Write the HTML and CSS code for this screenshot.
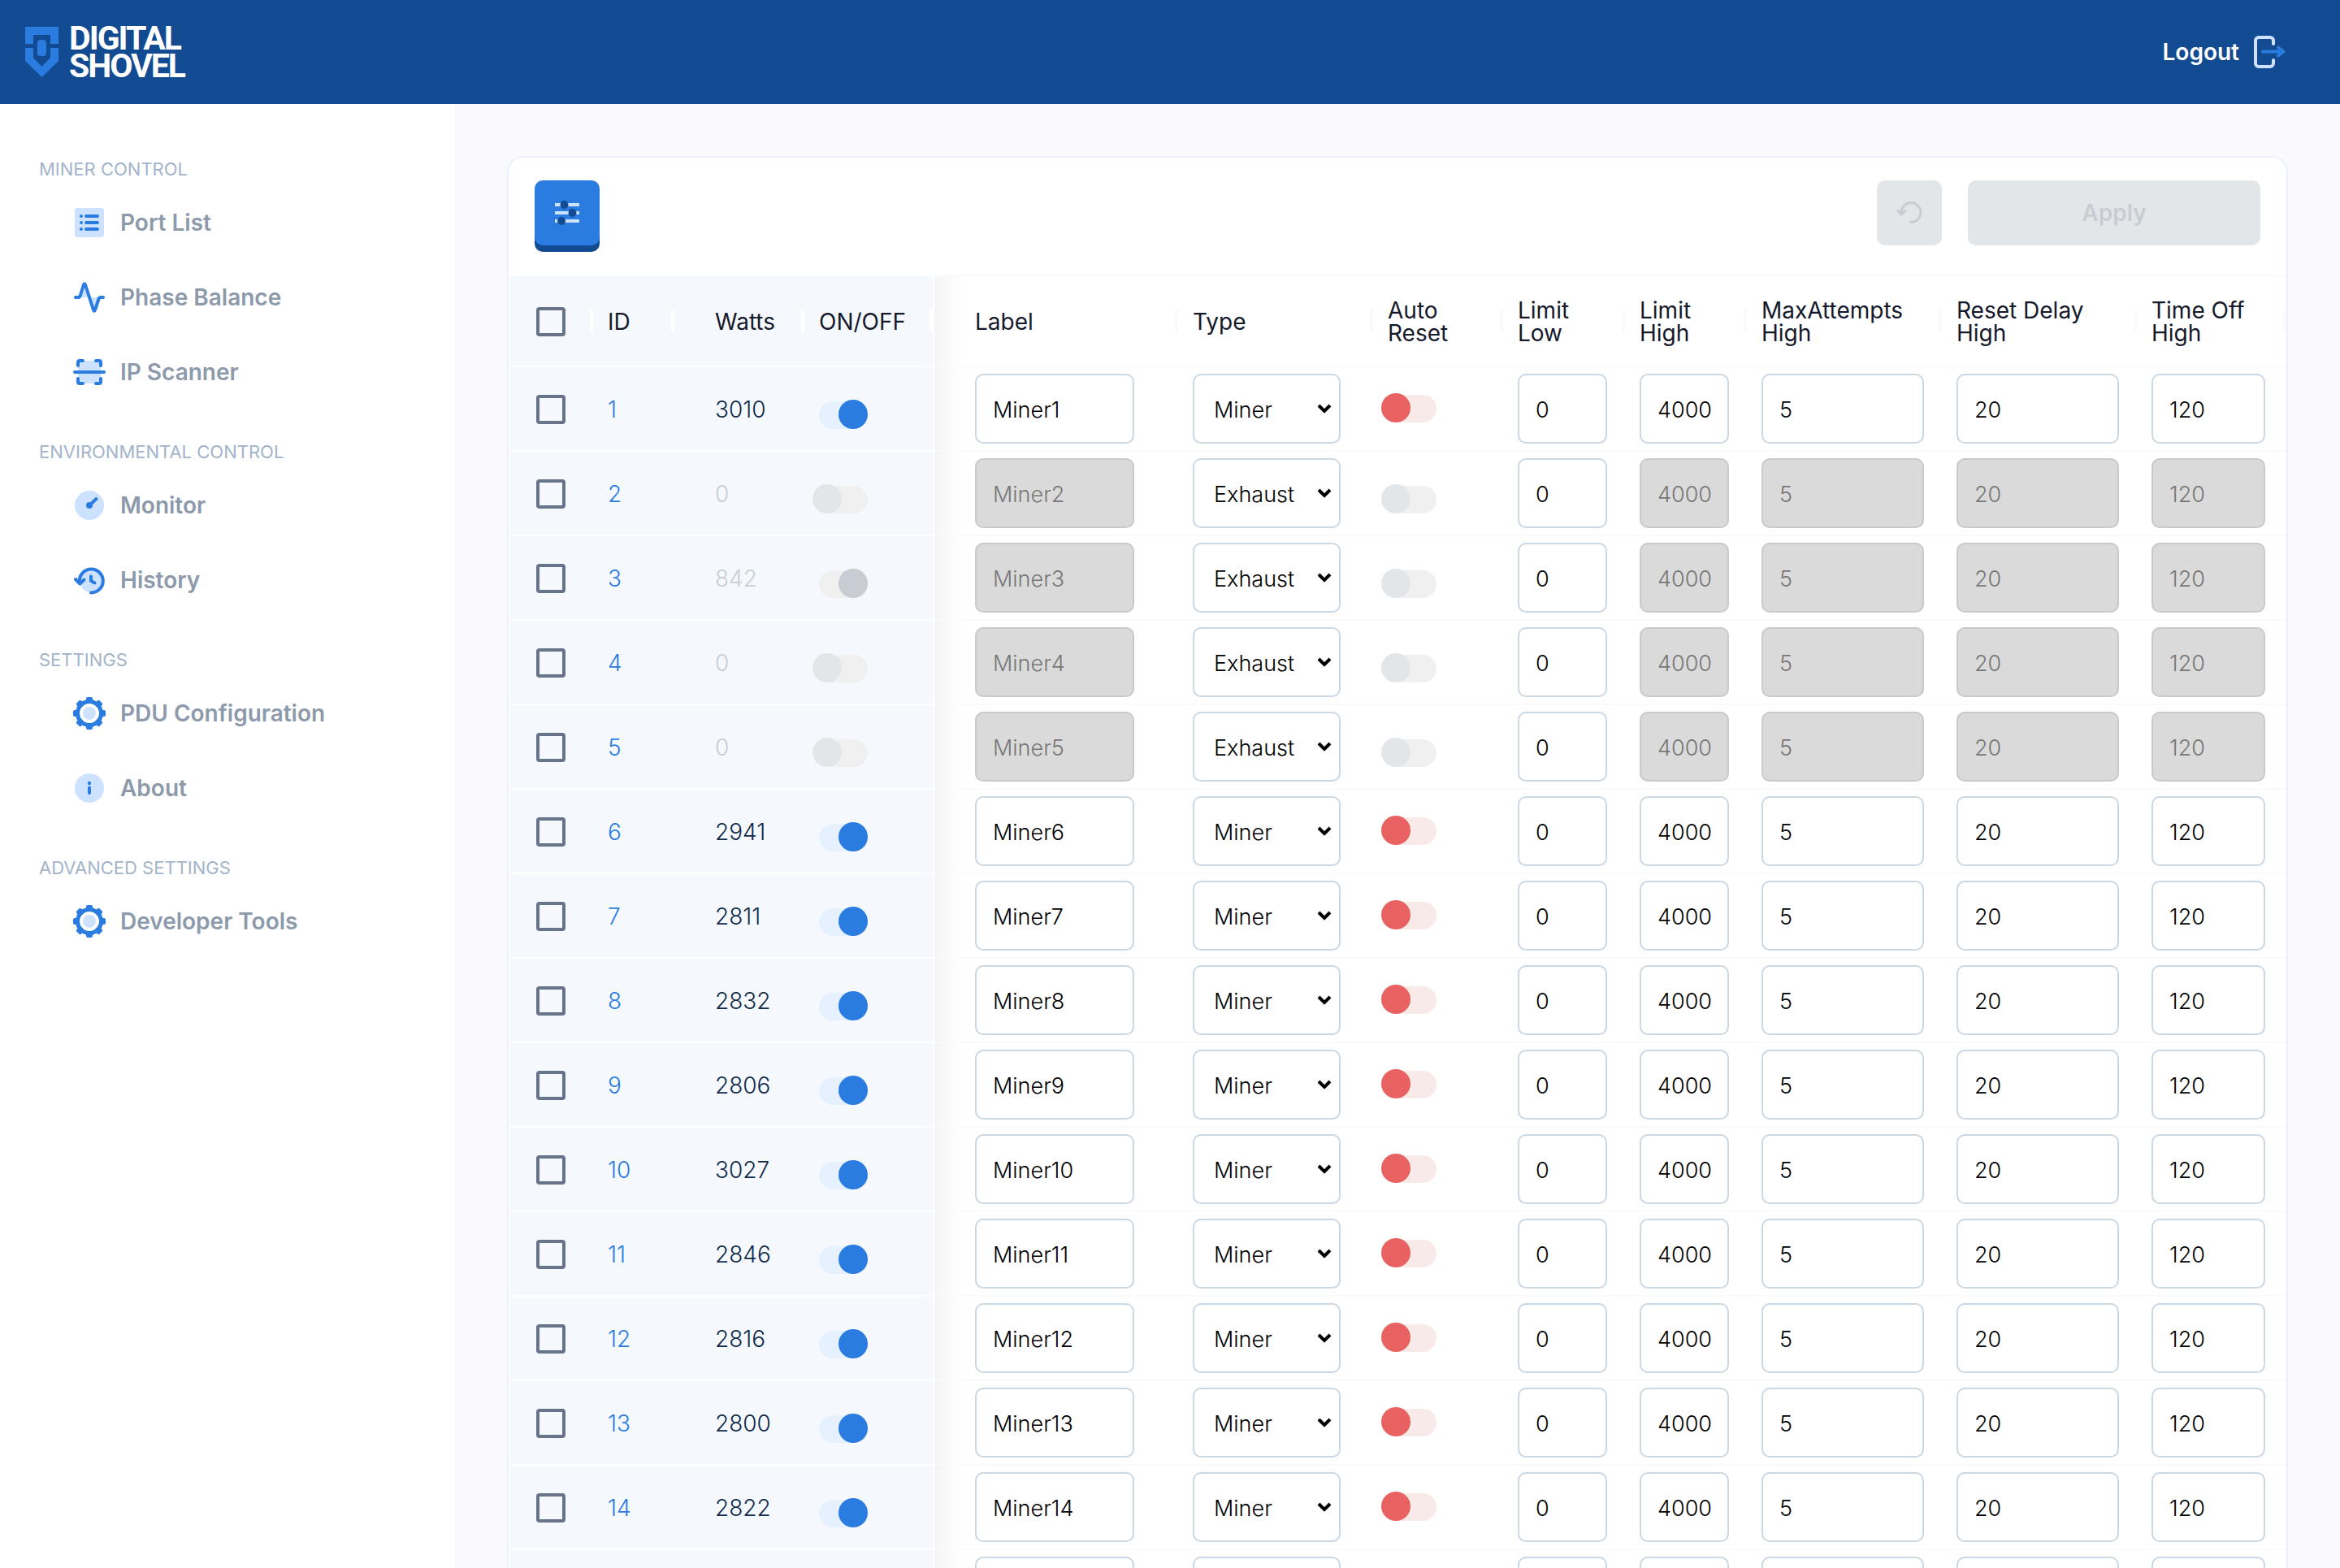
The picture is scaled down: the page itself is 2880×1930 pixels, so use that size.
FILE: index.html
```html
<!DOCTYPE html>
<html lang="en">
<head>
<meta charset="utf-8">
<title>Digital Shovel - Port List</title>
<link rel="stylesheet" href="styles.css">
</head>
<body>
<svg class="sprite" aria-hidden="true">
  <symbol id="gear" viewBox="0 0 48 48">
    <circle class="soft" cx="24" cy="24" r="8"/>
    <circle class="gear-ring" cx="24" cy="24" r="14.500"/>
    <g class="solid">
      <rect x="20" y="4" width="8" height="8" rx="2"/>
      <rect x="20" y="4" width="8" height="8" rx="2" transform="rotate(45 24 24)"/>
      <rect x="20" y="4" width="8" height="8" rx="2" transform="rotate(90 24 24)"/>
      <rect x="20" y="4" width="8" height="8" rx="2" transform="rotate(135 24 24)"/>
      <rect x="20" y="4" width="8" height="8" rx="2" transform="rotate(180 24 24)"/>
      <rect x="20" y="4" width="8" height="8" rx="2" transform="rotate(225 24 24)"/>
      <rect x="20" y="4" width="8" height="8" rx="2" transform="rotate(270 24 24)"/>
      <rect x="20" y="4" width="8" height="8" rx="2" transform="rotate(315 24 24)"/>
    </g>
  </symbol>
</svg>
<div class="app">
  <header class="topbar">
    <a class="brand" href="#">
      <svg class="brand-mark" viewBox="0 0 41 62" aria-hidden="true">
        <path d="M0 0H41V21H31V10H10V21H0Z"/>
        <path d="M0 26H10V38L20.500 49L31 38V26H41V42L20.500 62L0 42Z"/>
        <rect x="15" y="16" width="11" height="20" rx="4"/>
      </svg>
      <span class="brand-name">DIGITAL<br>SHOVEL</span>
    </a>
    <button class="logout" type="button">
      <span>Logout</span>
      <svg class="logout-icon" viewBox="0 0 42 44" aria-hidden="true">
        <path class="door" d="M26 12V8a4 4 0 0 0-4-4H8a4 4 0 0 0-4 4v28a4 4 0 0 0 4 4h14a4 4 0 0 0 4-4v-4"/>
        <path class="arrow" d="M13 21.500H38M32 16.500L38.500 21.500L32 26.500"/>
      </svg>
    </button>
  </header>
  <div class="body">
    <nav class="sidebar">
      <section class="group">
        <h2 class="group-title">MINER CONTROL</h2>
        <a class="item" href="#">
          <svg class="icon" viewBox="0 0 48 48"><rect class="soft" x="6" y="6" width="36" height="36" rx="4"/><path class="line" d="M14 16h0M14 24h0M14 32h0M20 16H34M20 24H34M20 32H34"/></svg>
          <span>Port List</span></a>
        <a class="item" href="#">
          <svg class="icon" viewBox="0 0 48 48"><path class="soft" d="M12 24L18 7L24 24ZM24 24H36L30 41Z"/><path class="line" d="M7 24H10Q12 24 12.700 22L17 8.500Q18 6 19 8.500L29 39.500Q30 42 31 39.500L35.500 26Q36 24 38 24H41"/></svg>
          <span>Phase Balance</span></a>
        <a class="item" href="#">
          <svg class="icon" viewBox="0 0 48 48"><rect class="soft" x="10" y="10" width="28" height="28"/><path class="line" d="M10 16V12Q10 10 12 10H16M32 10H36Q38 10 38 12V16M10 32V36Q10 38 12 38H16M32 38H36Q38 38 38 36V32M6 24H42"/></svg>
          <span>IP Scanner</span></a>
      </section>
      <section class="group">
        <h2 class="group-title">ENVIRONMENTAL CONTROL</h2>
        <a class="item" href="#">
          <svg class="icon" viewBox="0 0 48 48"><circle class="soft" cx="24" cy="24" r="18"/><circle class="solid" cx="24" cy="24" r="4"/><path class="line" d="M24 24L32.500 16"/></svg>
          <span>Monitor</span></a>
        <a class="item" href="#">
          <svg class="icon" viewBox="0 0 48 48"><circle class="soft" cx="26" cy="25" r="14"/><path class="line" d="M11.800 27V25A14.500 14.500 0 1 1 26 39.500M7 23L12.300 28.500L17.500 23.500M26 19.500V25L30.500 27.500"/></svg>
          <span>History</span></a>
      </section>
      <section class="group">
        <h2 class="group-title">SETTINGS</h2>
        <a class="item" href="#">
          <svg class="icon"><use href="#gear"/></svg>
          <span>PDU Configuration</span></a>
        <a class="item" href="#">
          <svg class="icon" viewBox="0 0 48 48"><circle class="soft" cx="24" cy="24" r="18"/><circle class="solid" cx="24" cy="18" r="2.200"/><rect class="solid" x="22" y="21.500" width="4" height="10.500" rx="2"/></svg>
          <span>About</span></a>
      </section>
      <section class="group">
        <h2 class="group-title">ADVANCED SETTINGS</h2>
        <a class="item" href="#">
          <svg class="icon"><use href="#gear"/></svg>
          <span>Developer Tools</span></a>
      </section>
    </nav>
    <main class="main">
      <div class="card">
        <div class="toolbar">
          <button class="filter" type="button" aria-label="Filters">
            <svg class="filter-icon" viewBox="0 0 30 30" aria-hidden="true">
              <path class="rail" d="M0 5H30M0 15H30M0 25H30"/>
              <circle cx="11.500" cy="5" r="5"/><circle cx="21.500" cy="15" r="5"/><circle cx="8" cy="25" r="5"/>
            </svg>
          </button>
          <div class="actions">
            <button class="undo" type="button" disabled aria-label="Undo">
              <svg class="undo-icon" viewBox="0 0 36 32" aria-hidden="true"><path d="M8 17V15A12 12 0 1 1 20 27.500M4 13.500L8 18L13 13.500"/></svg>
            </button>
            <button class="apply" type="button" disabled>Apply</button>
          </div>
        </div>
        <table class="ports">
          <colgroup>
            <col class="w-check"><col class="w-id"><col class="w-mid"><col class="w-mid"><col class="w-label"><col class="w-wide"><col class="w-mid"><col class="w-limit"><col class="w-limit"><col class="w-wide"><col class="w-wide"><col>
          </colgroup>
          <thead>
            <tr>
              <th class="frozen pick"><input class="tick" type="checkbox" aria-label="Select all ports"></th>
              <th class="frozen">ID</th>
              <th class="frozen watts">Watts</th>
              <th class="frozen edge">ON/OFF</th>
              <th class="label">Label</th>
              <th>Type</th>
              <th>Auto<br>Reset</th>
              <th>Limit<br>Low</th>
              <th>Limit<br>High</th>
              <th>MaxAttempts<br>High</th>
              <th>Reset Delay<br>High</th>
              <th>Time Off<br>High</th>
            </tr>
          </thead>
          <tbody id="rows"></tbody>
        </table>
      </div>
    </main>
  </div>
</div>
<script src="script.js"></script>
</body>
</html>
```
FILE: styles.css
```css
* { box-sizing: border-box; }

body {
  margin: 0;
  font-family: Inter, "Liberation Sans", sans-serif;
  font-size: 28px;
  color: #14192b;
}

button { font: inherit; border: 0; padding: 0; cursor: pointer; }
a { text-decoration: none; }

.sprite { display: none; }
.app { display: flex; flex-direction: column; height: 100vh; }

.topbar {
  flex: none;
  display: flex;
  align-items: center;
  justify-content: space-between;
  height: 128px;
  padding: 0 66px 0 31px;
  background: #124b91;
}
.brand { display: flex; align-items: center; gap: 13px; }
.brand-mark { width: 41px; height: 62px; fill: #2b7ce0; }
.brand-name {
  font-family: Roboto, sans-serif;
  font-weight: 700;
  font-size: 41px;
  line-height: 34px;
  letter-spacing: -2px;
  color: #fff;
}
.logout {
  display: flex;
  align-items: center;
  gap: 16px;
  background: none;
  color: #fff;
  font-weight: 600;
}
.logout-icon { width: 42px; height: 44px; fill: none; stroke-width: 4; stroke-linecap: round; stroke-linejoin: round; }
.door { stroke: #cce2ff; }
.arrow { stroke: #2b7ce0; }

.body { flex: 1; display: flex; min-height: 0; }

.sidebar { flex: none; width: 560px; padding-top: 60px; background: #fff; }
.group { margin-bottom: 32px; }
.group-title {
  margin: 0;
  padding-left: 48px;
  font-size: 22px;
  line-height: 40px;
  font-weight: 400;
  color: #a3b4ca;
}
.item {
  display: flex;
  align-items: center;
  gap: 14px;
  height: 92px;
  padding-left: 86px;
  font-weight: 600;
  color: #8c9aab;
}
.icon { width: 48px; height: 48px; }
.soft { fill: #cce2ff; }
.solid { fill: #2b7ce0; }
.line { fill: none; stroke: #2b7ce0; stroke-width: 4; stroke-linecap: round; stroke-linejoin: round; }
.gear-ring { fill: none; stroke: #2b7ce0; stroke-width: 5; }

.main {
  flex: 1;
  min-width: 0;
  padding: 64px;
  overflow: auto;
  scrollbar-width: none;
  background: #fafafc;
}
.card { border: 2px solid #ebf1fa; border-radius: 20px; background: #fff; }
.toolbar { display: flex; justify-content: space-between; padding: 28px 32px 36px; }
.actions { display: flex; gap: 32px; }
.filter, .undo, .apply {
  display: grid;
  place-items: center;
  width: 80px;
  height: 80px;
  border-radius: 10px;
}
.filter { background: #2b7ce0; box-shadow: 0 8px 0 #124b91; }
.filter-icon { width: 30px; height: 30px; fill: #124b91; }
.rail { stroke: #cce2ff; stroke-width: 4; }
.undo, .apply { background: #e3e6e8; color: #c8cdd3; }
.undo-icon { width: 36px; height: 32px; fill: none; stroke: #c8cdd3; stroke-width: 3; stroke-linecap: round; stroke-linejoin: round; }
.apply { width: 360px; font-weight: 600; }

.ports {
  width: 100%;
  table-layout: fixed;
  border-collapse: separate;
  border-spacing: 0;
}
.w-check { width: 104px; }
.w-id { width: 100px; }
.w-mid { width: 160px; }
.w-label { width: 300px; }
.w-wide { width: 240px; }
.w-limit { width: 150px; }

.ports th {
  height: 114px;
  padding: 2px 0 0 18px;
  border-top: 2px solid #fafafa;
  border-bottom: 2px solid #fafafa;
  background: linear-gradient(#fafafa, #fafafa) right center / 4px 28px no-repeat;
  text-align: left;
  line-height: 28px;
  font-weight: 400;
}
.ports td {
  height: 104px;
  padding: 0 22px 0 18px;
  border-bottom: 2px solid #fafafb;
  font-weight: 300;
}
.ports td.frozen { padding-top: 2px; background: #f5f9fe; border-color: #fff; }
.ports th.frozen {
  border-color: #fff;
  background: linear-gradient(#fff, #fff) right center / 4px 28px no-repeat, #f5f9fe;
}
.ports .pick { padding-left: 32px; border-left: 2px solid #fff; }
.ports .watts { padding-left: 50px; }
.ports .edge { border-right: 2px solid #fff; }
.ports th.label, .ports td.label { padding-left: 50px; }
.ports td.label { padding-right: 54px; background: linear-gradient(90deg, #f5f5f5, #fff) left / 36px 100% no-repeat; }
.ports th.label {
  background:
    linear-gradient(#fafafa, #fafafa) right center / 4px 28px no-repeat,
    linear-gradient(90deg, #f5f5f5, #fff) left / 36px 100% no-repeat;
}
.ports td.type { padding-right: 40px; }
.ports td.last { padding-right: 26px; }
.ports td.low { padding-top: 16px; }
.port-id { color: #2b7ce0; }
.ports td.watts { color: #0f2a4a; }
.ports td.idle { color: #c8cdd3; }

.tick {
  appearance: none;
  display: block;
  width: 36px;
  height: 36px;
  margin: 0;
  border: 4px solid #677389;
  border-radius: 4px;
}

.toggle {
  appearance: none;
  display: block;
  position: relative;
  width: 60px;
  height: 34px;
  margin: 0;
  border-radius: 17px;
  background: #f9eaea;
}
.toggle::before {
  content: "";
  position: absolute;
  top: -2px;
  left: -8px;
  width: 36px;
  height: 36px;
  border-radius: 50%;
  background: #e86262;
}
.toggle:checked { background: #e5f1fe; }
.toggle:checked::before { left: 24px; background: #2b7ce0; }
.toggle:disabled { background: #f0f0f0; }
.toggle:disabled::before { background: #e3e6e8; }
.toggle:disabled:checked::before { background: #c8cdd3; }

.field {
  display: block;
  width: 100%;
  height: 86px;
  padding: 2px 20px 0;
  border: 2px solid #cbd7e3;
  border-radius: 10px;
  background: #fff;
  color: #000;
  font: inherit;
  font-size: 27px;
}
.field:disabled { background: #dadada; border-color: #c6cace; color: #777; }
select.field {
  appearance: none;
  padding: 2px 24px 0;
  background: #fff url("data:image/svg+xml,%3Csvg xmlns='http://www.w3.org/2000/svg' viewBox='0 0 20 14'%3E%3Cpath d='M3 3L10 10L17 3' fill='none' stroke='black' stroke-width='4'/%3E%3C/svg%3E") right 8px center / 20px 14px no-repeat;
}
```
FILE: script.js
```js
const ports = [
  [3010, "Miner"], [0, "Exhaust"], [842, "Exhaust"], [0, "Exhaust"], [0, "Exhaust"],
  [2941, "Miner"], [2811, "Miner"], [2832, "Miner"], [2806, "Miner"], [3027, "Miner"],
  [2846, "Miner"], [2816, "Miner"], [2800, "Miner"], [2822, "Miner"], [2835, "Miner"]
];

const field = (name, id, value, off, cls = "") =>
  `<td class="${cls}"><input class="field" type="text" aria-label="${name} ${id}" value="${value}"${off}></td>`;

document.getElementById("rows").innerHTML = ports.map(([watts, type], i) => {
  const id = i + 1;
  const exhaust = type === "Exhaust";
  const off = exhaust ? " disabled" : "";
  return `<tr>
    <td class="frozen pick"><input class="tick" type="checkbox" aria-label="Select port ${id}"></td>
    <td class="frozen"><a class="port-id" href="#">${id}</a></td>
    <td class="frozen watts${exhaust ? " idle" : ""}">${watts}</td>
    <td class="frozen edge low"><input class="toggle" type="checkbox" aria-label="Power ${id}"${watts ? " checked" : ""}${off}></td>
    ${field("Label", id, "Miner" + id, off, "label")}
    <td class="type"><select class="field" aria-label="Type ${id}">
      <option${exhaust ? "" : " selected"}>Miner</option>
      <option${exhaust ? " selected" : ""}>Exhaust</option>
    </select></td>
    <td class="${exhaust ? "low" : ""}"><input class="toggle" type="checkbox" aria-label="Auto reset ${id}"${off}></td>
    ${field("Limit low", id, 0, "")}
    ${field("Limit high", id, 4000, off)}
    ${field("Max attempts high", id, 5, off)}
    ${field("Reset delay high", id, 20, off)}
    ${field("Time off high", id, 120, off, "last")}
  </tr>`;
}).join("");
```
